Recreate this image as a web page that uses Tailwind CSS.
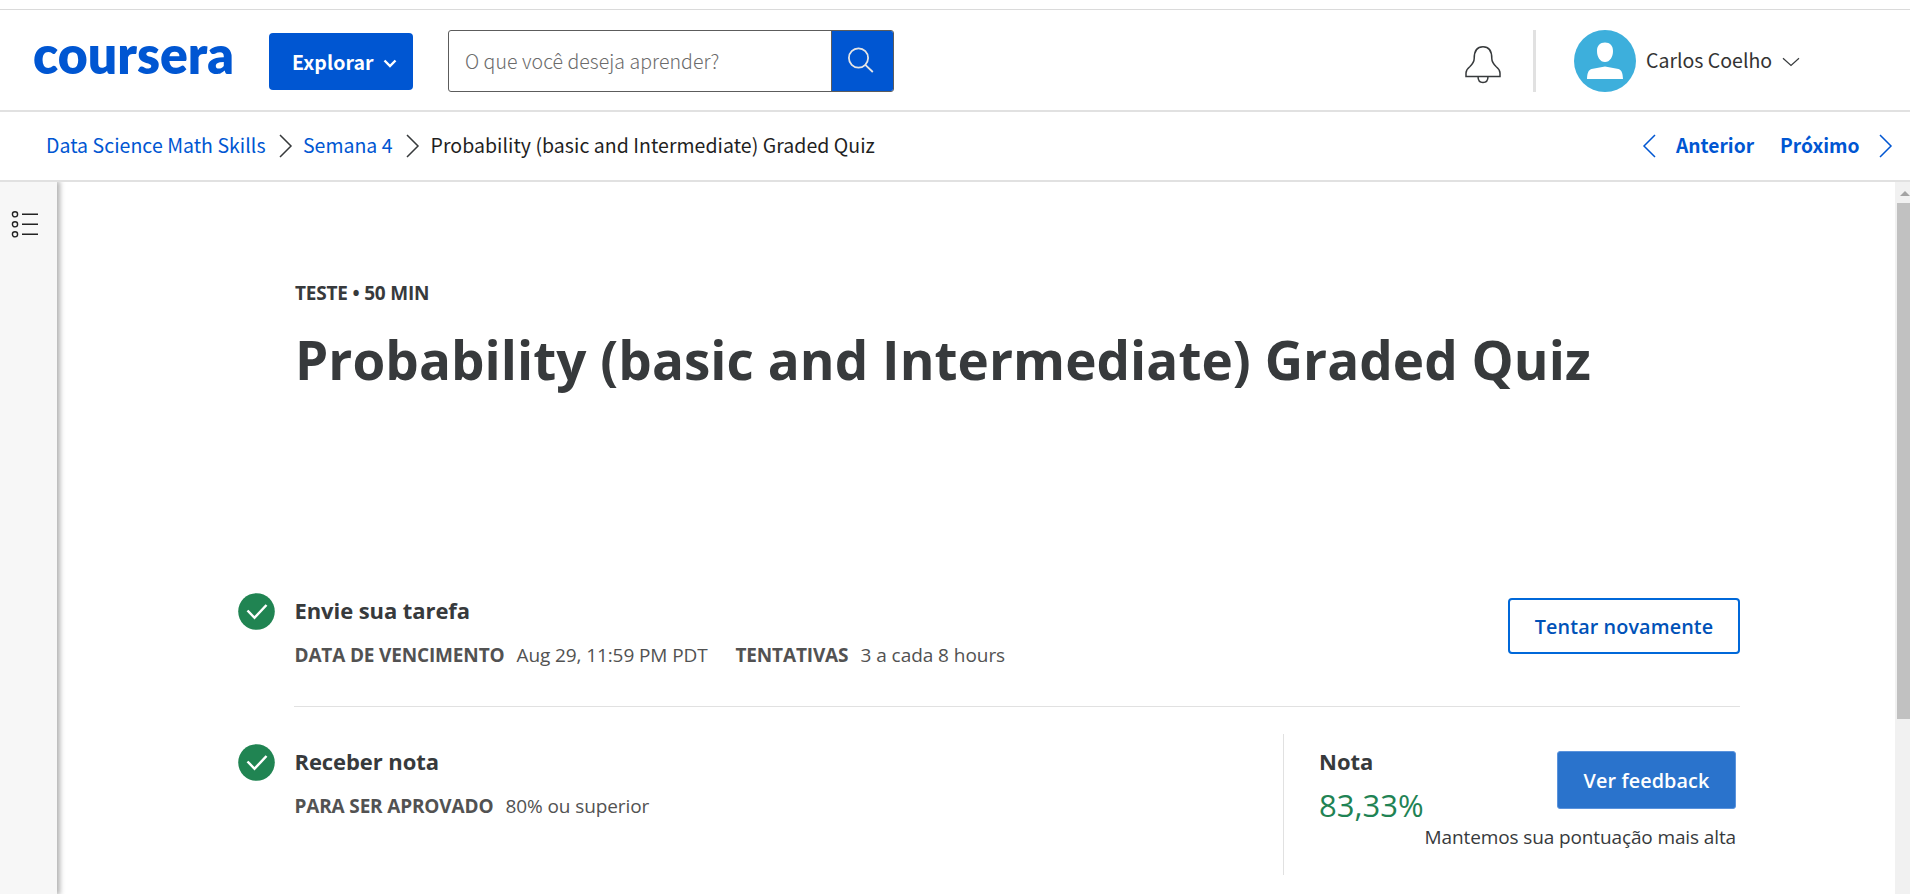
<!DOCTYPE html>
<html lang="pt-BR">
<head>
<meta charset="utf-8">
<title>Coursera</title>
<script src="https://cdn.jsdelivr.net/npm/@tailwindcss/browser@4"></script>
</head>
<body class="h-[894px] w-[1910px] overflow-hidden bg-white font-['Open_Sans',sans-serif] whitespace-nowrap text-[#373a3c]">
<div class="flex h-full flex-col">
  <div class="h-[10px] shrink-0 border-b border-[#dadada]"></div>
  <header class="flex h-[102px] shrink-0 items-start border-b-2 border-[#e1e1e1] font-['Noto_Sans_CJK_SC',sans-serif] text-[19.5px]">
    <svg class="mt-[20px] ml-[34px] h-[60px] w-[200px] shrink-0 overflow-visible" viewBox="0 0 200 60"><text x="-1" y="43.500" textLength="201" lengthAdjust="spacingAndGlyphs" font-family="Lato" font-weight="800" font-size="53" fill="#0056d2">coursera</text></svg>
    <button class="mt-[23px] ml-[35px] flex h-[57px] w-[144px] shrink-0 items-center rounded-[4px] bg-[#0056d2] pl-[23px] font-bold text-white">
      <span class="w-[91px] text-left leading-[28px] tracking-[0.1px]">Explorar</span>
      <svg class="mt-[4px] h-[9px] w-[14px]" viewBox="0 0 14 9" fill="none" stroke="#fff" stroke-width="2.4"><path d="M1.5 1.5 7 7l5.500-5.500"/></svg>
    </button>
    <div class="mt-[20px] ml-[35px] flex h-[62px] w-[446px] shrink-0 overflow-hidden rounded-[3px] border border-[#5c5c5c]">
      <div class="flex w-[382px] items-center pl-[16px] font-light text-[#6b6b6b]"><span class="leading-[28px] tracking-[0.06px]">O que você deseja aprender?</span></div>
      <div class="flex-1 border-l border-[#5c5c5c] bg-[#0056d2] pt-[16px] pl-[15px]">
        <svg class="h-[28px] w-[28px]" viewBox="0 0 28 28" fill="none" stroke="#e5e5e5" stroke-width="1.8"><circle cx="11.500" cy="11" r="9.600"/><path d="m18.300 17.800 7.500 7.200"/></svg>
      </div>
    </div>
    <svg class="mt-[35px] ml-[570px] h-[40px] w-[38px] shrink-0" viewBox="0 0 38 40" fill="none" stroke="#373a3c" stroke-width="1.500"><path d="M2 31.500V28c0-2.500 1.500-4.500 4-6.500 2.500-2.500 4.200-5 4.200-8C10.200 6 13 1.800 19 1.800S27.800 6 27.800 13.500c0 3 1.700 5.500 4.200 8 2.500 2 4 4 4 6.500v3.500zM14 31.500c0 4 2 6 5 6s5-2 5-6"/></svg>
    <div class="mt-[20px] ml-[31px] h-[62px] w-[3px] shrink-0 bg-[#e1e1e1]"></div>
    <svg class="mt-[20px] ml-[38px] h-[62px] w-[62px] shrink-0" viewBox="0 0 62 62"><circle cx="31" cy="31" r="31" fill="#3dafdc"/><path fill="#fff" d="M31 12.500c5 0 8 3 8 8.500 0 6-3 11-8 11s-8-5-8-11c0-5.500 3-8.500 8-8.500zM13 49c.3-6 1.300-9 4.500-10L31 36.500 44.500 39c3.200 1 4.200 4 4.500 10z"/></svg>
    <span class="mt-[36px] ml-[10px] w-[136px] shrink-0 leading-[28px] text-[#333]">Carlos Coelho</span>
    <svg class="mt-[47px] h-[10px] w-[18px] shrink-0" viewBox="0 0 18 10" fill="none" stroke="#373a3c" stroke-width="1.200"><path d="m1 1.300 8 7.200 8-7.200"/></svg>
  </header>
  <nav class="flex h-[70px] shrink-0 items-center border-b-2 border-[#e1e1e1] pl-[46px] font-['Noto_Sans_CJK_SC',sans-serif] text-[19.5px] leading-[28px] text-[#0056d2]">
    <span class="-mt-[2px] w-[233px] tracking-[0.04px]">Data Science Math Skills</span>
    <svg class="h-[24px] w-[14px]" viewBox="0 0 14 24" fill="none" stroke="#373a3c" stroke-width="1.500"><path d="m1 1 11 11L1 23"/></svg>
    <span class="-mt-[2px] ml-[10px] w-[103px]">Semana 4</span>
    <svg class="h-[24px] w-[14px]" viewBox="0 0 14 24" fill="none" stroke="#373a3c" stroke-width="1.500"><path d="m1 1 11 11L1 23"/></svg>
    <span class="-mt-[2px] ml-[10.5px] tracking-[0.04px] text-[#1f1f1f]">Probability (basic and Intermediate) Graded Quiz</span>
    <div class="mr-[17px] ml-auto flex items-center text-[19.2px] font-bold">
      <svg class="-ml-[1px] h-[24px] w-[14px]" viewBox="0 0 14 24" fill="none" stroke="#0056d2" stroke-width="1.500"><path d="M13 1 2 12l11 11"/></svg>
      <span class="-mt-[2px] ml-[20px] w-[104px]">Anterior</span>
      <span class="-mt-[2px] w-[99px]">Próximo</span>
      <svg class="h-[24px] w-[14px]" viewBox="0 0 14 24" fill="none" stroke="#0056d2" stroke-width="1.500"><path d="m1 1 11 11L1 23"/></svg>
    </div>
  </nav>
  <div class="flex min-h-0 flex-1">
    <aside class="w-[57px] shrink-0 bg-[#f7f7f7] pt-[28px] pl-[11px] shadow-[2px_0_5px_1px_rgba(0,0,0,0.3)] [clip-path:inset(0_-12px_0_0)]">
      <svg class="h-[28px] w-[28px]" viewBox="0 0 28 28" fill="none" stroke="#222" stroke-width="1.400"><circle cx="4" cy="4.300" r="2.600"/><circle cx="4" cy="14.300" r="2.600"/><circle cx="4" cy="24.300" r="2.600"/><path d="M11 4.300h16M11 14.300h16M11 24.300h16"/></svg>
    </aside>
    <main class="flex flex-1 flex-col pl-[181px]">
      <div class="pl-[57px]">
        <p class="mt-[97px] text-[19px] leading-[28px] font-bold tracking-[-0.2px]">TESTE • 50 MIN</p>
        <h1 class="mt-[17px] mb-[1px] text-[53px] leading-[72px] font-bold tracking-[0.05px]">Probability (basic and Intermediate) Graded Quiz</h1>
      </div>
      <section class="mt-[183px] flex">
        <svg class="mt-[13px] h-[37px] w-[37px] shrink-0" viewBox="0 0 37 37"><circle cx="18.500" cy="18.500" r="18.300" fill="#208452"/><path d="m9.500 17.500 7 7.300L28.500 12" fill="none" stroke="#fff" stroke-width="2.500"/></svg>
        <div class="ml-[19px] flex h-[127px] w-[1446px] justify-between border-b border-[#e1e1e1]">
          <div class="pt-[15px] pl-[0.5px]">
            <h2 class="text-[22px] leading-[30px] font-bold tracking-[-0.08px]">Envie sua tarefa</h2>
            <p class="mt-[16px] flex text-[19px] leading-[28px] text-[#525252]"><b class="w-[222px] tracking-[-0.16px]">DATA DE VENCIMENTO</b><span class="w-[219px] tracking-[-0.1px]">Aug 29, 11:59 PM PDT</span><b class="w-[125px] tracking-[-0.16px]">TENTATIVAS</b><span class="tracking-[-0.05px]">3 a cada 8 hours</span></p>
          </div>
          <button class="mt-[18px] h-[56px] w-[232px] rounded-[4px] border-2 border-[#0068d9] pt-[1px] text-[19.8px] leading-[28px] font-semibold tracking-[0.1px] text-[#0052b8]">Tentar novamente</button>
        </div>
      </section>
      <section class="flex">
        <svg class="mt-[37px] h-[37px] w-[37px] shrink-0" viewBox="0 0 37 37"><circle cx="18.500" cy="18.500" r="18.300" fill="#208452"/><path d="m9.500 17.500 7 7.300L28.500 12" fill="none" stroke="#fff" stroke-width="2.500"/></svg>
        <div class="ml-[19px] flex w-[1446px] justify-between">
          <div class="pt-[39px] pl-[0.5px]">
            <h2 class="text-[22px] leading-[30px] font-bold tracking-[-0.08px]">Receber nota</h2>
            <p class="mt-[16px] flex text-[19px] leading-[28px] text-[#525252]"><b class="w-[211px] tracking-[-0.16px]">PARA SER APROVADO</b><span class="tracking-[-0.1px]">80% ou superior</span></p>
          </div>
          <div class="mt-[27px] flex h-[141px] w-[457px] justify-between border-l border-[#e1e1e1] pr-[4px] pl-[35px]">
            <div class="w-[105px] pt-[12px]">
              <h2 class="text-[22px] leading-[30px] font-bold">Nota</h2>
              <p class="mt-[9px] text-[31px] leading-[40px] text-[#1f8354]">83,33%</p>
            </div>
            <div class="flex w-[311px] flex-col items-end pt-[17px]">
              <button class="h-[58px] w-[179px] rounded-[3px] border border-[#5b93dc] bg-[#2a73cc] pt-[1px] text-[19.8px] leading-[28px] font-semibold tracking-[0.1px] text-white">Ver feedback</button>
              <p class="mt-[14px] text-[19px] leading-[28px] tracking-[-0.12px]">Mantemos sua pontuação mais alta</p>
            </div>
          </div>
        </div>
      </section>
    </main>
    <div class="flex w-[15px] shrink-0 flex-col bg-[#f1f1f1]">
      <svg class="mt-[9px] ml-[5px] h-[5px] w-[10px] shrink-0" viewBox="0 0 10 5"><path fill="#a3a3a3" d="M0 5 5 0l5 5z"/></svg>
      <div class="mt-[7px] ml-[2px] h-[516px] bg-[#c1c1c1]"></div>
    </div>
  </div>
</div>
</body>
</html>
